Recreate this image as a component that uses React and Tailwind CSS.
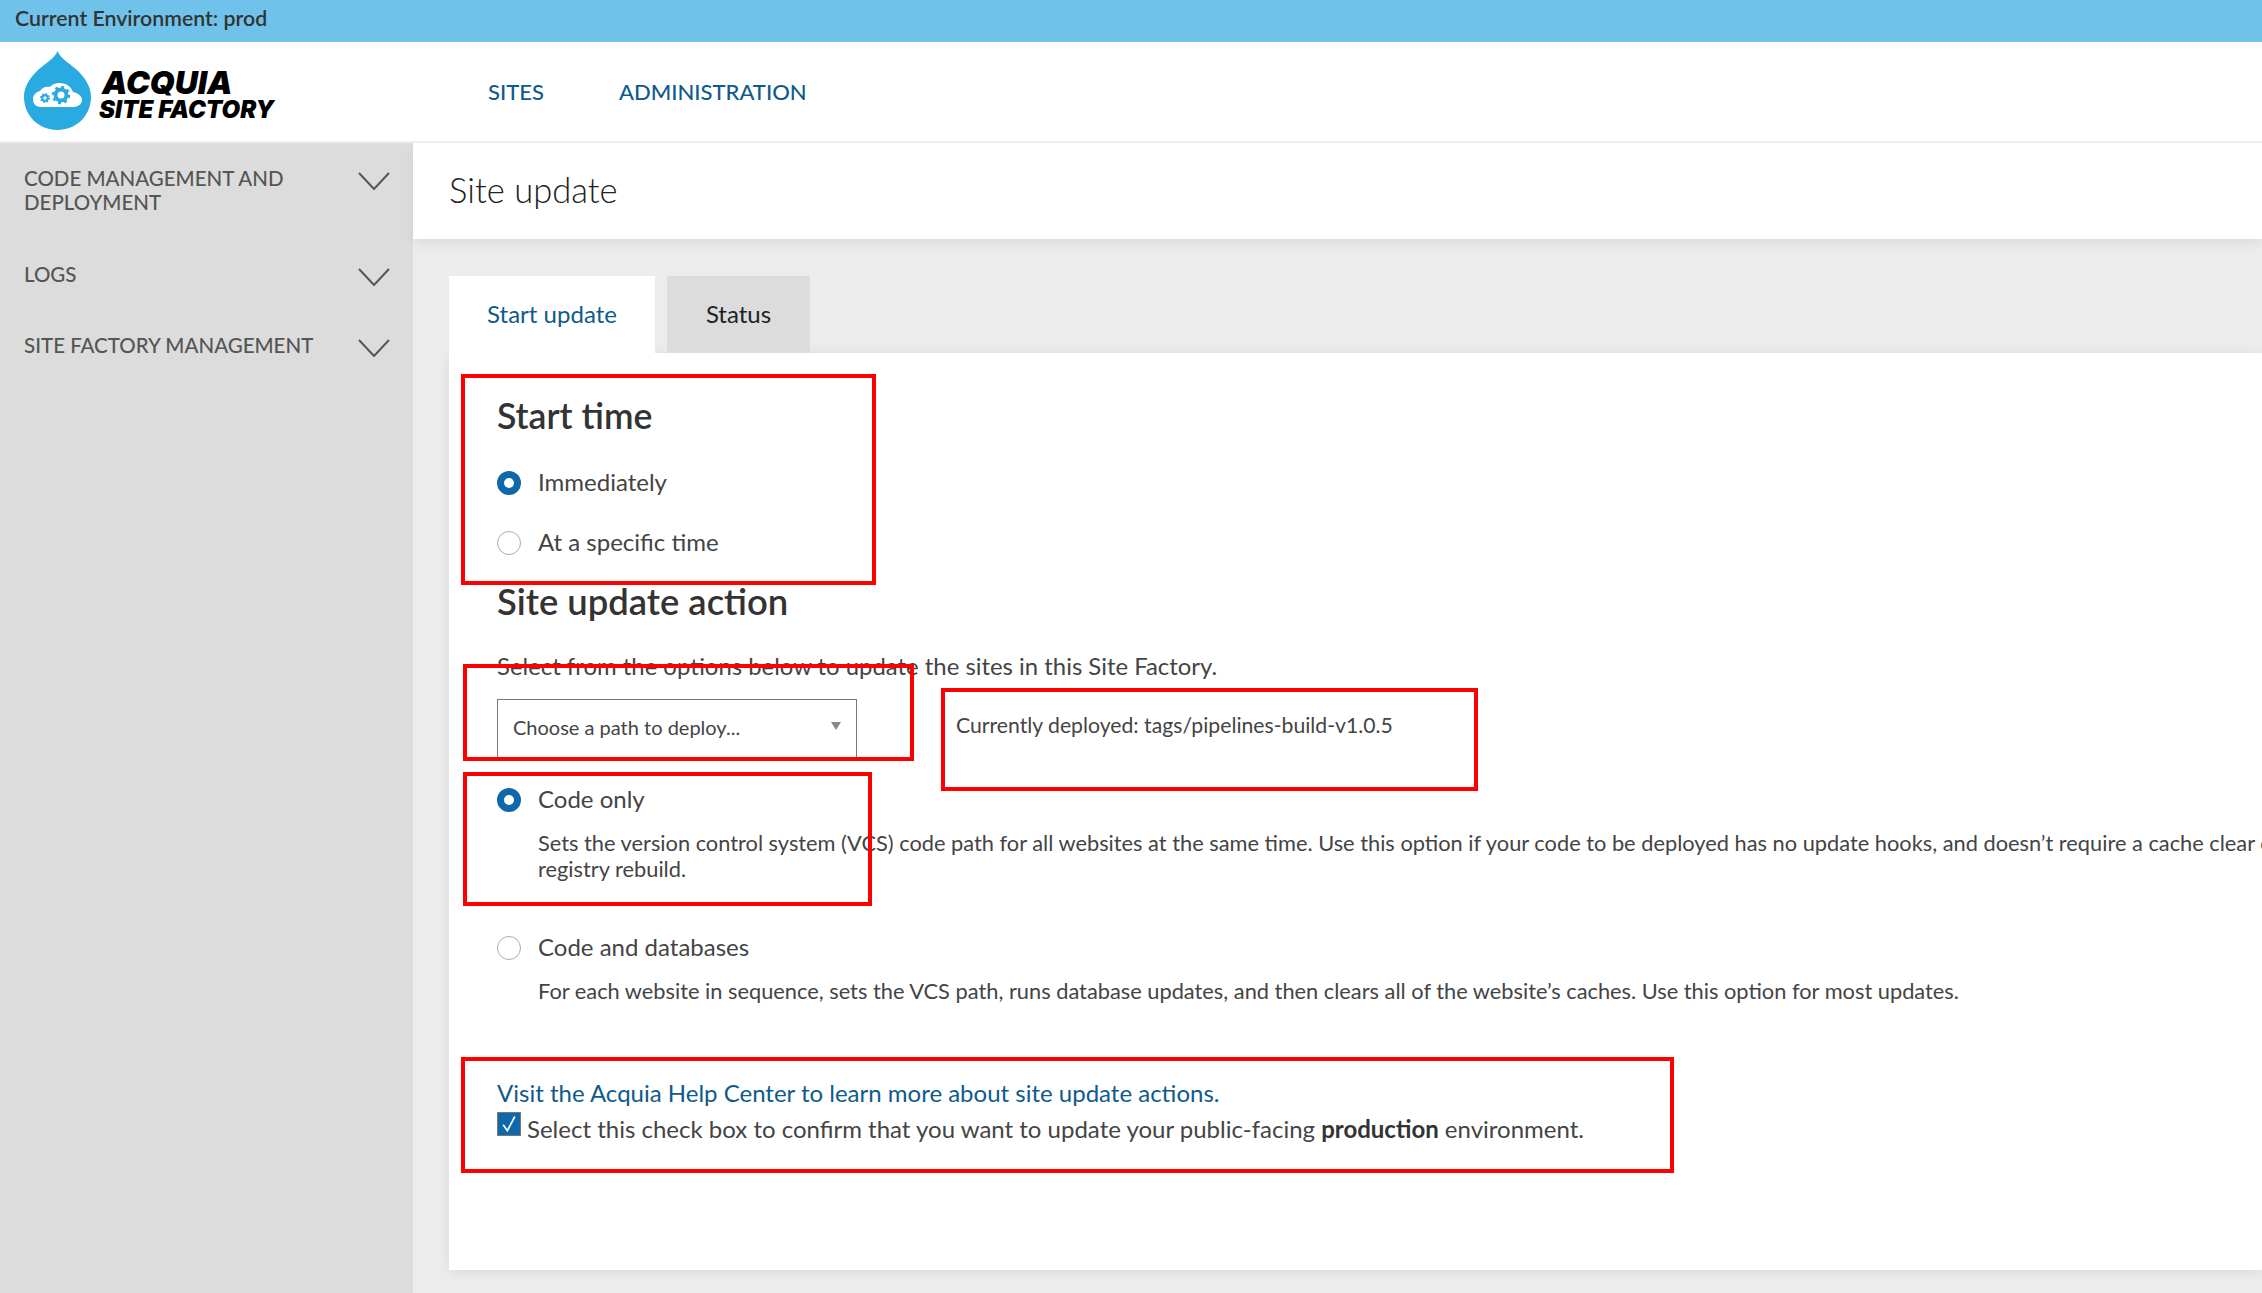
import React from "react";

const Chevron = ({ className }) => (
  <svg viewBox="0 0 32 18" className={`w-[32px] h-[18px] ${className || ""}`} fill="none" stroke="#555" strokeWidth="2">
    <path d="M1 1l15 16L31 1" />
  </svg>
);

const Logo = () => (
  <div className="flex items-center ml-[24px] mt-[-2px] w-[440px] shrink-0">
    <svg viewBox="0 0 67 79" className="w-[67px] h-[79px] shrink-0">
      <path d="M33.5 0C36 7 45 12 53 19C62 28 67 36 67 46C67 65 52 79 33.5 79C15 79 0 65 0 46C0 36 5 28 14 19C22 12 31 7 33.5 0Z" fill="#29abe2" />
      <path d="M17 56C11 56 9 52 9 48C9 44 12 41 16 40C18 36 23 35 26 36C29 32 36 31 41 33C46 35 48 38 49 41C54 42 58 45 58 49C58 53 54 56 50 56Z" fill="#fff" />
      <circle cx="37" cy="44" r="5.5" fill="none" stroke="#29abe2" strokeWidth="4" />
      <circle cx="37" cy="44" r="8" fill="none" stroke="#29abe2" strokeWidth="2.5" strokeDasharray="2.8 3.48" />
      <circle cx="21" cy="47" r="2.8" fill="none" stroke="#29abe2" strokeWidth="2.2" />
      <circle cx="21" cy="47" r="4.4" fill="none" stroke="#29abe2" strokeWidth="1.4" strokeDasharray="1.6 1.85" />
    </svg>
    <div className="ml-[8px] mt-[8px] font-['Inter',sans-serif] font-black italic text-black">
      <div className="text-[32px] leading-[29px] pl-[3px]">ACQUIA</div>
      <div className="text-[24px] leading-[25px] whitespace-nowrap">SITE FACTORY</div>
    </div>
  </div>
);

const SideItem = ({ children, className }) => (
  <div className={`flex justify-between pl-[24px] pr-[23px] text-[20.5px] leading-[24px] text-[#555] font-medium ${className || ""}`}>
    <span className="w-[300px]">{children}</span>
    <Chevron className="mt-[6px]" />
  </div>
);

const Radio = ({ checked }) => (
  <input
    type="radio"
    readOnly
    checked={checked}
    className={`appearance-none w-[24px] h-[24px] rounded-full shrink-0 bg-white ${
      checked ? "border-[7px] border-[#0f68aa]" : "border border-[#aaa]"
    }`}
  />
);

const RadioRow = ({ checked, label, className }) => (
  <label className={`flex items-center gap-[17px] h-[30px] text-[24px] leading-[30px] ${className || ""}`}>
    <Radio checked={checked} />
    <span className="mb-[2px]">{label}</span>
  </label>
);

const RedBox = ({ className }) => (
  <div className={`absolute border-[4px] border-[#f00] pointer-events-none ${className}`} />
);

export default function App() {
  return (
    <div className="relative w-[2262px] h-[1293px] overflow-hidden flex flex-col bg-[#ececec] font-['Lato',sans-serif] text-[#444]">
      <div className="h-[42px] bg-[#6fc3ea] flex items-center pl-[15px] pb-[5px] text-[21.3px] font-semibold text-[#333] shrink-0">
        Current Environment: prod
      </div>

      <header className="h-[101px] bg-white flex items-center border-b-2 border-[#eee] shrink-0">
        <Logo />
        <nav className="flex gap-[75px] ml-[24px] text-[22px] font-medium text-[#0f5a8c]">
          <a>SITES</a>
          <a>ADMINISTRATION</a>
        </nav>
      </header>

      <div className="flex flex-1 min-h-0">
        <aside className="w-[413px] bg-[#dcdcdc] pt-[23px] shrink-0">
          <SideItem>CODE MANAGEMENT AND DEPLOYMENT</SideItem>
          <SideItem className="mt-[48px]">LOGS</SideItem>
          <SideItem className="mt-[47px]">SITE FACTORY MANAGEMENT</SideItem>
        </aside>

        <main className="flex-1 min-w-0">
          <div className="h-[96px] bg-white flex items-center pl-[36px] pb-[3px] text-[34.6px] font-light text-[#222] shadow-[0_6px_12px_-2px_rgba(0,0,0,0.08)]">
            Site update
          </div>

          <div className="pl-[36px] pt-[37px]">
            <div className="flex gap-[12px] text-[24px]">
              <div className="w-[206px] h-[77px] pb-[2px] bg-white text-[#0f5a8c] flex items-center justify-center">Start update</div>
              <div className="w-[143px] h-[77px] pb-[2px] bg-[#dcdcdc] text-[#222] flex items-center justify-center">Status</div>
            </div>

            <div className="h-[917px] bg-white shadow-[0_2px_12px_rgba(0,0,0,0.08)] pl-[48px] pt-[42px]">
              <h2 className="text-[35.6px] leading-[42px] font-semibold text-[#333]">Start time</h2>
              <RadioRow checked label="Immediately" className="mt-[31px]" />
              <RadioRow label="At a specific time" className="mt-[30px]" />
              <h2 className="text-[36.4px] leading-[42px] font-semibold text-[#333] mt-[22px]">Site update action</h2>
              <p className="text-[23.9px] leading-[30px] mt-[29px]">Select from the options below to update the sites in this Site Factory.</p>

              <div className="flex mt-[18px]">
                <div className="w-[360px] h-[62px] border border-[#777] flex items-center justify-between pl-[15px] pr-[15px] pb-[6px] text-[20px] text-[#444]">
                  Choose a path to deploy...
                  <svg viewBox="0 0 10 10" className="w-[10px] h-[10px] mb-[3px] fill-[#888]">
                    <path d="M0 1h10L5 9z" />
                  </svg>
                </div>
                <div className="ml-[99px] text-[21.2px] leading-[28px] mt-[12px]">Currently deployed: tags/pipelines-build-v1.0.5</div>
              </div>

              <RadioRow checked label="Code only" className="mt-[24px]" />
              <p className="ml-[41px] mt-[15px] w-[1760px] text-[21.8px] leading-[26px]">
                Sets the version control system (VCS) code path for all websites at the same time. Use this option if your code to be deployed has no update hooks, and doesn&rsquo;t require a cache clear or registry rebuild.
              </p>

              <RadioRow label="Code and databases" className="mt-[51px]" />
              <p className="ml-[41px] mt-[15px] text-[21.8px] leading-[26px]">
                For each website in sequence, sets the VCS path, runs database updates, and then clears all of the website&rsquo;s caches. Use this option for most updates.
              </p>

              <a className="block mt-[74px] text-[24px] leading-[30px] text-[#0f5a8c]">Visit the Acquia Help Center to learn more about site update actions.</a>
              <label className="flex items-start text-[24px] leading-[30px] mt-[6px]">
                <span className="w-[24px] h-[24px] bg-[#0f68aa] border border-[#777] shrink-0 flex items-center justify-center mt-[-2px]">
                  <svg viewBox="0 0 24 24" className="w-[20px] h-[20px]" fill="none" stroke="#fff" strokeWidth="2">
                    <path d="M5 13l5 7L19 3" />
                  </svg>
                </span>
                <span className="ml-[6px] whitespace-nowrap">
                  Select this check box to confirm that you want to update your public-facing <strong className="font-bold text-[#333]">production</strong> environment.
                </span>
              </label>
            </div>
          </div>
        </main>
      </div>

      <RedBox className="left-[461px] top-[374px] w-[415px] h-[211px]" />
      <RedBox className="left-[463px] top-[664px] w-[451px] h-[97px]" />
      <RedBox className="left-[941px] top-[688px] w-[537px] h-[103px]" />
      <RedBox className="left-[463px] top-[772px] w-[409px] h-[134px]" />
      <RedBox className="left-[461px] top-[1057px] w-[1213px] h-[116px]" />
    </div>
  );
}
